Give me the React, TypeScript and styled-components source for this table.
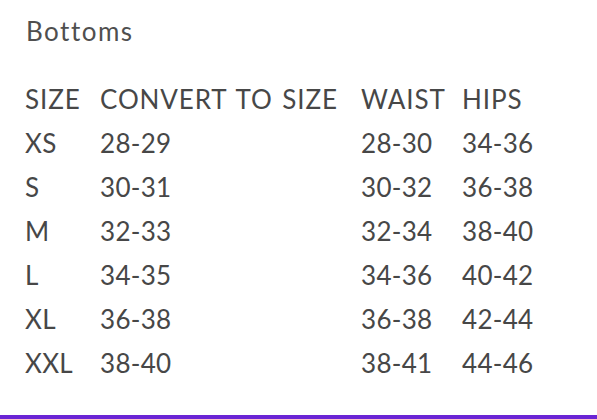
import React from "react";
import styled, { createGlobalStyle } from "styled-components";

const Global = createGlobalStyle`
  html, body { margin: 0; padding: 0; background: #fff; }
  body { font-family: Lato, "Noto Sans", sans-serif; color: #474747; }
`;

const Page = styled.div`
  width: 597px;
  height: 419px;
  display: flex;
  flex-direction: column;
  box-sizing: border-box;
`;

const Content = styled.div`
  flex: 1;
  padding: 14px 0 0 25px;
`;

const Title = styled.h2`
  margin: 0 0 29px 1px;
  font-size: 26px;
  line-height: 34px;
  font-weight: 400;
  letter-spacing: 1.5px;
  color: #4f4f4f;
`;

const Table = styled.div`
  display: grid;
  grid-template-columns: 75px 261px 101px auto;
  grid-auto-rows: 44px;
  align-items: center;
  font-size: 26px;
`;

const Cell = styled.div<{ $head?: boolean }>`
  line-height: 44px;
  white-space: nowrap;
  letter-spacing: ${(p) => (p.$head ? "0.9px" : "0.3px")};
  word-spacing: ${(p) => (p.$head ? "2px" : "0")};
`;

const Bar = styled.div`
  height: 4px;
  background: #6a24d4;
`;

const rows = [
  ["XS", "28-29", "28-30", "34-36"],
  ["S", "30-31", "30-32", "36-38"],
  ["M", "32-33", "32-34", "38-40"],
  ["L", "34-35", "34-36", "40-42"],
  ["XL", "36-38", "36-38", "42-44"],
  ["XXL", "38-40", "38-41", "44-46"],
];

export default function App() {
  return (
    <Page>
      <Global />
      <Content>
        <Title>Bottoms</Title>
        <Table>
          {["SIZE", "CONVERT TO SIZE", "WAIST", "HIPS"].map((h) => (
            <Cell key={h} $head>
              {h}
            </Cell>
          ))}
          {rows.map((r) =>
            r.map((c, i) => <Cell key={r[0] + i}>{c}</Cell>)
          )}
        </Table>
      </Content>
      <Bar />
    </Page>
  );
}
